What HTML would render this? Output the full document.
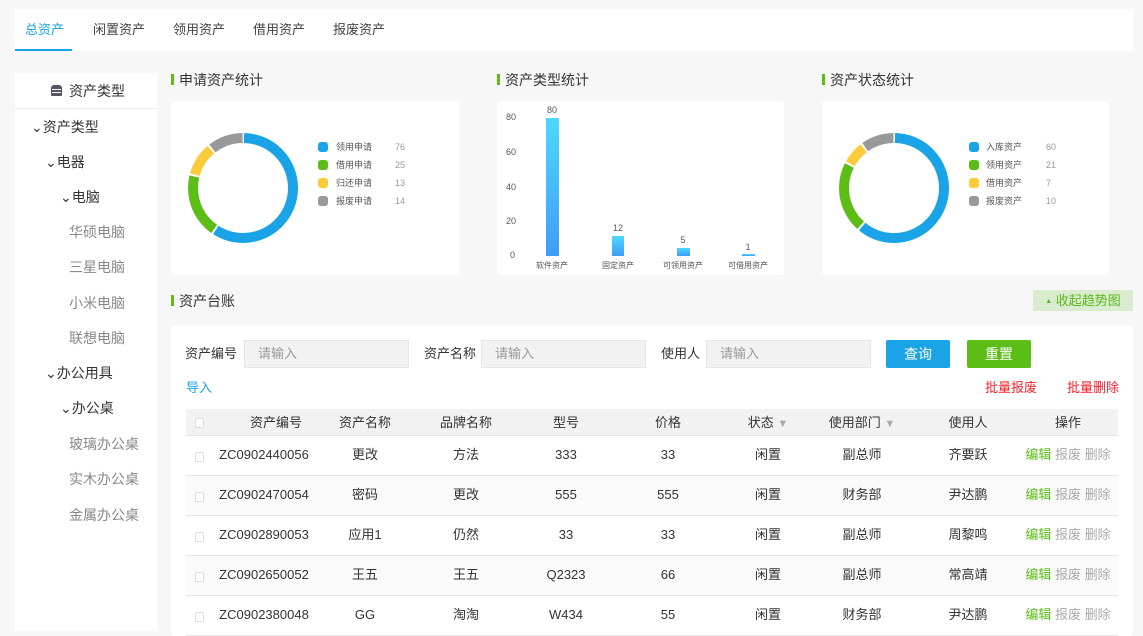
<!DOCTYPE html>
<html><head><meta charset="utf-8"><style>
*{margin:0;padding:0;box-sizing:border-box}
body{width:1143px;height:631px;overflow:hidden;background:#f7f7f7;font-family:"Liberation Sans","Noto Sans CJK SC",sans-serif;color:#333;position:relative;font-size:13px;line-height:16px}
.a{position:absolute;white-space:nowrap}
.tabs{left:15px;top:9px;width:1118px;height:42px;background:#fff}
.tab{top:22px;font-size:13px;color:#444}
.side{left:15px;top:73px;width:142px;height:558px;background:#fff}
.tr{font-size:14px;color:#333;line-height:18px}
.tg{font-size:14px;color:#888;line-height:18px}
.ttl{font-size:14px;color:#333;padding-left:8px;line-height:18px}
.ttl:before{content:"";position:absolute;left:0;top:3px;width:3px;height:11px;background:#5bbd15}
.card{background:#fff;border-radius:3px}
.lg{font-size:9px;color:#555;line-height:10px}
.lv{font-size:9px;color:#999;line-height:10px}
.sw{width:10px;height:10px;border-radius:3px}
.inp{height:28px;background:#f2f2f2;border:1px solid #e6e6e6;color:#999;font-size:13px;padding:5px 13px;line-height:16px}
.btn{height:28px;color:#fff;font-size:14px;text-align:center;line-height:28px;border-radius:2px}
.row{left:186px;width:932px;height:40px;border-bottom:1px solid #e6e6e6}
.c{position:absolute;transform:translateX(-50%);white-space:nowrap;font-size:13px;color:#333;line-height:16px}
.cb{position:absolute;left:9px;width:9px;height:10px;border:1px solid #ddd;border-radius:2px;background:#fff}
</style></head><body>
<div class="a tabs"></div>
<div class="a tab" style="left:25px;color:#1aa3e6">总资产</div>
<div class="a" style="left:15px;top:49px;width:57px;height:2px;background:#1aa3e6"></div>
<div class="a tab" style="left:93px">闲置资产</div>
<div class="a tab" style="left:173px">领用资产</div>
<div class="a tab" style="left:253px">借用资产</div>
<div class="a tab" style="left:333px">报废资产</div>

<div class="a side"></div>
<div class="a" style="left:51px;top:85px;width:11px;height:11px;border-radius:3px 3px 1px 1px;background:#556;"></div>
<div class="a" style="left:52px;top:89px;width:9px;height:1px;background:#fff"></div>
<div class="a" style="left:52px;top:92px;width:9px;height:1px;background:#fff"></div>
<div class="a tr" style="left:69px;top:82px">资产类型</div>
<div class="a" style="left:15px;top:108px;width:142px;height:1px;background:#eee"></div>
<div class="a tr" style="left:31px;top:118px">⌄资产类型</div>
<div class="a tr" style="left:45px;top:153px">⌄电器</div>
<div class="a tr" style="left:60px;top:188px">⌄电脑</div>
<div class="a tg" style="left:69px;top:223px">华硕电脑</div>
<div class="a tg" style="left:69px;top:258px">三星电脑</div>
<div class="a tg" style="left:69px;top:294px">小米电脑</div>
<div class="a tg" style="left:69px;top:329px">联想电脑</div>
<div class="a tr" style="left:45px;top:364px">⌄办公用具</div>
<div class="a tr" style="left:60px;top:399px">⌄办公桌</div>
<div class="a tg" style="left:69px;top:435px">玻璃办公桌</div>
<div class="a tg" style="left:69px;top:470px">实木办公桌</div>
<div class="a tg" style="left:69px;top:506px">金属办公桌</div>

<div class="a ttl" style="left:171px;top:71px">申请资产统计</div>
<div class="a ttl" style="left:497px;top:71px">资产类型统计</div>
<div class="a ttl" style="left:822px;top:71px">资产状态统计</div>
<div class="a card" style="left:171px;top:101px;width:288px;height:174px"></div>
<div class="a card" style="left:497px;top:101px;width:287px;height:174px"></div>
<div class="a card" style="left:822px;top:101px;width:287px;height:174px"></div>

<svg class="a" style="left:0;top:0" width="1143" height="300">
<g transform="translate(243,188) rotate(-90)" fill="none" stroke-width="10">
<circle r="50" stroke="#1aa3e6" stroke-dasharray="184.5 400" stroke-dashoffset="-1"/>
<circle r="50" stroke="#5bbd15" stroke-dasharray="59.4 400" stroke-dashoffset="-187.5"/>
<circle r="50" stroke="#fccb3a" stroke-dasharray="29.9 400" stroke-dashoffset="-248.9"/>
<circle r="50" stroke="#999" stroke-dasharray="32.4 400" stroke-dashoffset="-280.8"/>
</g>
<g transform="translate(894,188) rotate(-90)" fill="none" stroke-width="10">
<circle r="50" stroke="#1aa3e6" stroke-dasharray="190.3 400" stroke-dashoffset="-1"/>
<circle r="50" stroke="#5bbd15" stroke-dasharray="65.3 400" stroke-dashoffset="-193.3"/>
<circle r="50" stroke="#fccb3a" stroke-dasharray="20.4 400" stroke-dashoffset="-260.6"/>
<circle r="50" stroke="#999" stroke-dasharray="30.1 400" stroke-dashoffset="-283"/>
</g>
<defs><linearGradient id="g" x1="0" y1="0" x2="0" y2="1"><stop offset="0" stop-color="#4dd8ff"/><stop offset="1" stop-color="#3f9cf5"/></linearGradient></defs>
<g font-size="9" fill="#555" font-family="Liberation Sans,Noto Sans CJK SC,sans-serif">
<text x="506" y="120">80</text><text x="506" y="155">60</text><text x="506" y="190">40</text><text x="506" y="224">20</text><text x="510" y="258">0</text>
<rect x="546" y="118" width="13" height="138" fill="url(#g)"/>
<rect x="612" y="236" width="12" height="20" fill="url(#g)"/>
<rect x="677" y="248" width="13" height="8" fill="url(#g)"/>
<rect x="742" y="254" width="13" height="2" fill="url(#g)"/>
<text x="552" y="113" text-anchor="middle">80</text><text x="618" y="231" text-anchor="middle">12</text><text x="683" y="243" text-anchor="middle">5</text><text x="748" y="250" text-anchor="middle">1</text>
<text x="552" y="268" text-anchor="middle" font-size="8">软件资产</text><text x="618" y="268" text-anchor="middle" font-size="8">固定资产</text><text x="683" y="268" text-anchor="middle" font-size="8">可领用资产</text><text x="748" y="268" text-anchor="middle" font-size="8">可借用资产</text>
</g>
</svg>

<div class="a sw" style="left:318px;top:142px;background:#1aa3e6"></div><div class="a lg" style="left:336px;top:142px">领用申请</div><div class="a lv" style="left:395px;top:142px">76</div>
<div class="a sw" style="left:318px;top:160px;background:#5bbd15"></div><div class="a lg" style="left:336px;top:160px">借用申请</div><div class="a lv" style="left:395px;top:160px">25</div>
<div class="a sw" style="left:318px;top:178px;background:#fccb3a"></div><div class="a lg" style="left:336px;top:178px">归还申请</div><div class="a lv" style="left:395px;top:178px">13</div>
<div class="a sw" style="left:318px;top:196px;background:#999"></div><div class="a lg" style="left:336px;top:196px">报废申请</div><div class="a lv" style="left:395px;top:196px">14</div>

<div class="a sw" style="left:969px;top:142px;background:#1aa3e6"></div><div class="a lg" style="left:986px;top:142px">入库资产</div><div class="a lv" style="left:1046px;top:142px">60</div>
<div class="a sw" style="left:969px;top:160px;background:#5bbd15"></div><div class="a lg" style="left:986px;top:160px">领用资产</div><div class="a lv" style="left:1046px;top:160px">21</div>
<div class="a sw" style="left:969px;top:178px;background:#fccb3a"></div><div class="a lg" style="left:986px;top:178px">借用资产</div><div class="a lv" style="left:1046px;top:178px">7</div>
<div class="a sw" style="left:969px;top:196px;background:#999"></div><div class="a lg" style="left:986px;top:196px">报废资产</div><div class="a lv" style="left:1046px;top:196px">10</div>

<div class="a ttl" style="left:171px;top:292px">资产台账</div>
<div class="a" style="left:1033px;top:290px;width:100px;height:21px;background:#d9ecd0;color:#5bb81a;font-size:13px;line-height:21px;text-align:center"><span style="font-size:7px;vertical-align:2px">▲</span> 收起趋势图</div>

<div class="a card" style="left:171px;top:326px;width:962px;height:310px"></div>
<div class="a" style="left:185px;top:346px">资产编号</div>
<div class="a inp" style="left:244px;top:340px;width:165px">请输入</div>
<div class="a" style="left:424px;top:346px">资产名称</div>
<div class="a inp" style="left:481px;top:340px;width:165px">请输入</div>
<div class="a" style="left:661px;top:346px">使用人</div>
<div class="a inp" style="left:706px;top:340px;width:165px">请输入</div>
<div class="a btn" style="left:886px;top:340px;width:64px;background:#1aa3e6">查询</div>
<div class="a btn" style="left:967px;top:340px;width:64px;background:#5bbd15">重置</div>
<div class="a" style="left:186px;top:380px;color:#1aa3e6">导入</div>
<div class="a" style="left:985px;top:380px;color:#f5222d">批量报废</div>
<div class="a" style="left:1067px;top:380px;color:#f5222d">批量删除</div>

<div class="a" style="left:186px;top:409px;width:932px;height:27px;background:#f2f2f2;border-bottom:1px solid #e6e6e6">
<div class="cb" style="top:9px"></div>
<div class="c" style="left:90px;top:6px">资产编号</div>
<div class="c" style="left:179px;top:6px">资产名称</div>
<div class="c" style="left:280px;top:6px">品牌名称</div>
<div class="c" style="left:380px;top:6px">型号</div>
<div class="c" style="left:482px;top:6px">价格</div>
<div class="c" style="left:582px;top:6px">状态 <span style="color:#aaa;font-size:11px">▼</span></div>
<div class="c" style="left:676px;top:6px">使用部门 <span style="color:#aaa;font-size:11px">▼</span></div>
<div class="c" style="left:782px;top:6px">使用人</div>
<div class="c" style="left:882px;top:6px">操作</div>
</div>

<div class="a row" style="top:436px;background:#fff"><div class="cb" style="top:16px"></div><div class="c" style="left:78px;top:11px">ZC0902440056</div><div class="c" style="left:179px;top:11px">更改</div><div class="c" style="left:280px;top:11px">方法</div><div class="c" style="left:380px;top:11px">333</div><div class="c" style="left:482px;top:11px">33</div><div class="c" style="left:582px;top:11px">闲置</div><div class="c" style="left:676px;top:11px">副总师</div><div class="c" style="left:782px;top:11px">齐要跃</div><div class="c" style="left:882px;top:11px"><span style="color:#5bbd15">编辑</span> <span style="color:#aaa">报废 删除</span></div></div>
<div class="a row" style="top:476px;background:#fafafa"><div class="cb" style="top:16px"></div><div class="c" style="left:78px;top:11px">ZC0902470054</div><div class="c" style="left:179px;top:11px">密码</div><div class="c" style="left:280px;top:11px">更改</div><div class="c" style="left:380px;top:11px">555</div><div class="c" style="left:482px;top:11px">555</div><div class="c" style="left:582px;top:11px">闲置</div><div class="c" style="left:676px;top:11px">财务部</div><div class="c" style="left:782px;top:11px">尹达鹏</div><div class="c" style="left:882px;top:11px"><span style="color:#5bbd15">编辑</span> <span style="color:#aaa">报废 删除</span></div></div>
<div class="a row" style="top:516px;background:#fff"><div class="cb" style="top:16px"></div><div class="c" style="left:78px;top:11px">ZC0902890053</div><div class="c" style="left:179px;top:11px">应用1</div><div class="c" style="left:280px;top:11px">仍然</div><div class="c" style="left:380px;top:11px">33</div><div class="c" style="left:482px;top:11px">33</div><div class="c" style="left:582px;top:11px">闲置</div><div class="c" style="left:676px;top:11px">副总师</div><div class="c" style="left:782px;top:11px">周黎鸣</div><div class="c" style="left:882px;top:11px"><span style="color:#5bbd15">编辑</span> <span style="color:#aaa">报废 删除</span></div></div>
<div class="a row" style="top:556px;background:#fafafa"><div class="cb" style="top:16px"></div><div class="c" style="left:78px;top:11px">ZC0902650052</div><div class="c" style="left:179px;top:11px">王五</div><div class="c" style="left:280px;top:11px">王五</div><div class="c" style="left:380px;top:11px">Q2323</div><div class="c" style="left:482px;top:11px">66</div><div class="c" style="left:582px;top:11px">闲置</div><div class="c" style="left:676px;top:11px">副总师</div><div class="c" style="left:782px;top:11px">常高靖</div><div class="c" style="left:882px;top:11px"><span style="color:#5bbd15">编辑</span> <span style="color:#aaa">报废 删除</span></div></div>
<div class="a row" style="top:596px;background:#fff"><div class="cb" style="top:16px"></div><div class="c" style="left:78px;top:11px">ZC0902380048</div><div class="c" style="left:179px;top:11px">GG</div><div class="c" style="left:280px;top:11px">淘淘</div><div class="c" style="left:380px;top:11px">W434</div><div class="c" style="left:482px;top:11px">55</div><div class="c" style="left:582px;top:11px">闲置</div><div class="c" style="left:676px;top:11px">财务部</div><div class="c" style="left:782px;top:11px">尹达鹏</div><div class="c" style="left:882px;top:11px"><span style="color:#5bbd15">编辑</span> <span style="color:#aaa">报废 删除</span></div></div>
</body></html>
